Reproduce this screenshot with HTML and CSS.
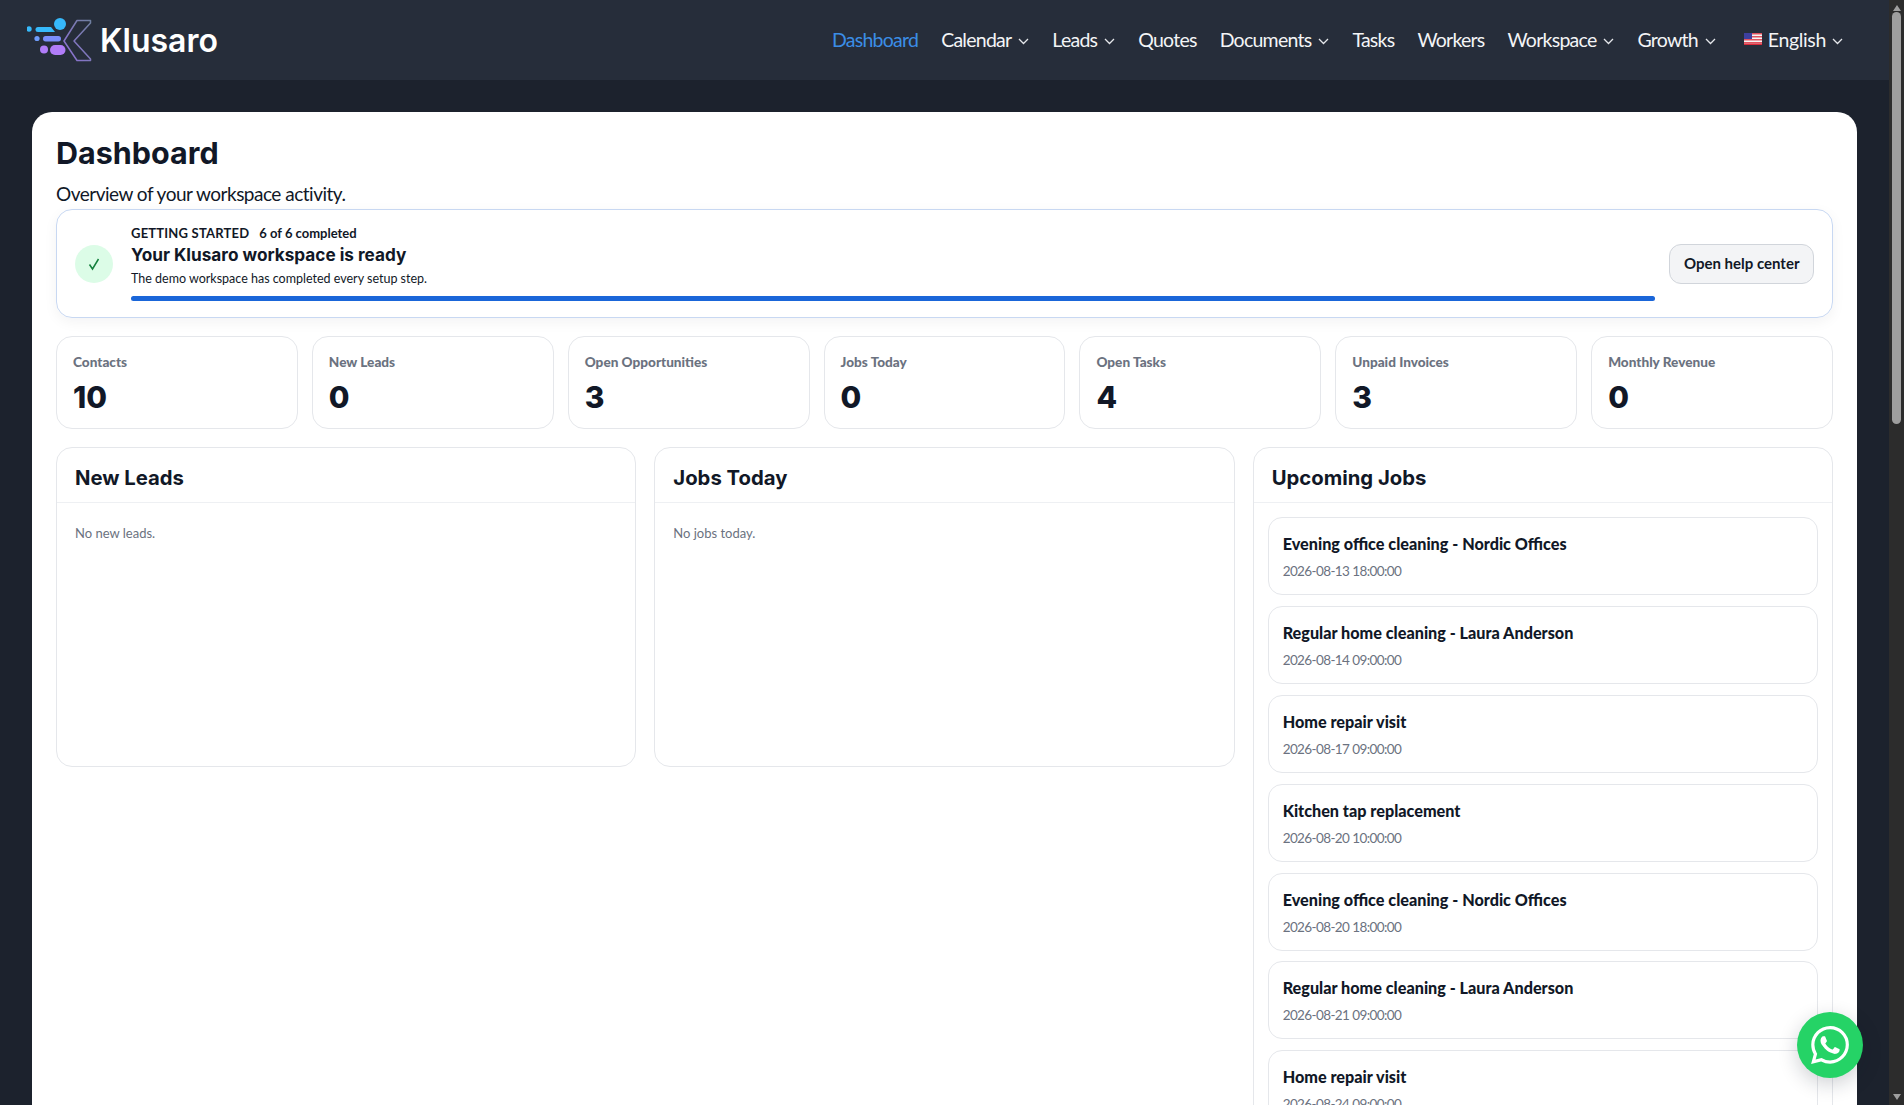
FILE: index.html
```html
<!doctype html>
<html>
    <head>
        <meta charset="utf-8" />
        <meta name="viewport" content="width=device-width, initial-scale=1" />
        <title>Dashboard</title>
        <link rel="stylesheet" href="styles.css">
    </head>
    <body>
        <header class="navbar">
            <a class="brand" href="#">
                <svg class="brand-mark" width="66" height="44" viewBox="27 20 66 44">
                    <defs>
                        <linearGradient id="kGrad" x1="0" y1="1" x2="1" y2="0">
                            <stop offset="0" stop-color="#8f6fd8" />
                            <stop offset="1" stop-color="#6f7f9f" />
                        </linearGradient>
                    </defs>
                    <circle cx="60" cy="26" r="6" fill="#36b9fb" />
                    <circle cx="29" cy="31" r="2.7" fill="#36b9fb" />
                    <path d="M38 29h13l4 5H38a2.5 2.5 0 0 1 0-5z" fill="#36b9fb" />
                    <circle cx="37" cy="40.500" r="2.600" fill="#6f9cfb" />
                    <rect x="43" y="38" width="18" height="5.500" rx="2.700" fill="#7b8dfb" />
                    <circle cx="44" cy="51.500" r="4" fill="#b07cf8" />
                    <rect x="50" y="47" width="15.500" height="10" rx="5" fill="#b07cf8" />
                    <path d="M64 43 77 22.500h13.500v2.500L74 43l16.500 18v1.500H77z" fill="none" stroke="url(#kGrad)" stroke-width="1.500" stroke-linejoin="round" />
                </svg>
                <span class="brand-name">Klusaro</span>
            </a>
            <nav class="nav">
                <a class="nav-link active" href="#">Dashboard</a>
                <a class="nav-link" href="#">Calendar <svg class="caret" width="11" height="7" viewBox="0 0 11 7"><path d="M1 1l4.500 4.500L10 1" /></svg></a>
                <a class="nav-link" href="#">Leads <svg class="caret" width="11" height="7" viewBox="0 0 11 7"><path d="M1 1l4.500 4.500L10 1" /></svg></a>
                <a class="nav-link" href="#">Quotes</a>
                <a class="nav-link" href="#">Documents <svg class="caret" width="11" height="7" viewBox="0 0 11 7"><path d="M1 1l4.500 4.500L10 1" /></svg></a>
                <a class="nav-link" href="#">Tasks</a>
                <a class="nav-link" href="#">Workers</a>
                <a class="nav-link" href="#">Workspace <svg class="caret" width="11" height="7" viewBox="0 0 11 7"><path d="M1 1l4.500 4.500L10 1" /></svg></a>
                <a class="nav-link" href="#">Growth <svg class="caret" width="11" height="7" viewBox="0 0 11 7"><path d="M1 1l4.500 4.500L10 1" /></svg></a>
                <a class="nav-link lang" href="#">
                    <svg class="flag" width="18" height="12" viewBox="0 0 18 12">
                        <rect width="18" height="12" fill="#f4f4f4" />
                        <path d="M0 0h18v1.500H0zM0 3h18v1.500H0zM0 6h18v1.500H0zM0 9h18v1.500H0z" fill="#e0525e" />
                        <rect y="10.500" width="18" height="1.500" fill="#d92a3a" />
                        <rect width="8" height="6" fill="#3d3f9e" />
                    </svg>
                    English <svg class="caret" width="11" height="7" viewBox="0 0 11 7"><path d="M1 1l4.500 4.500L10 1" /></svg>
                </a>
            </nav>
        </header>

        <main class="page">
            <h1>Dashboard</h1>
            <p class="subtitle">Overview of your workspace activity.</p>

            <section class="setup">
                <div class="setup-check">
                    <svg width="14" height="14" viewBox="0 0 14 14"><path d="M2.500 7.500 5.500 12 11.500 2" /></svg>
                </div>
                <div class="setup-main">
                    <div class="setup-eyebrow"><span class="caps">GETTING STARTED</span><span>6 of 6 completed</span></div>
                    <div class="setup-title">Your Klusaro workspace is ready</div>
                    <div class="setup-desc">The demo workspace has completed every setup step.</div>
                    <div class="progress"><div class="progress-fill"></div></div>
                </div>
                <a class="btn" href="#">Open help center</a>
            </section>

            <section class="stats">
                <div class="stat"><div class="stat-label">Contacts</div><div class="stat-value">10</div></div>
                <div class="stat"><div class="stat-label">New Leads</div><div class="stat-value">0</div></div>
                <div class="stat"><div class="stat-label">Open Opportunities</div><div class="stat-value">3</div></div>
                <div class="stat"><div class="stat-label">Jobs Today</div><div class="stat-value">0</div></div>
                <div class="stat"><div class="stat-label">Open Tasks</div><div class="stat-value">4</div></div>
                <div class="stat"><div class="stat-label">Unpaid Invoices</div><div class="stat-value">3</div></div>
                <div class="stat"><div class="stat-label">Monthly Revenue</div><div class="stat-value">0</div></div>
            </section>

            <section class="panels">
                <div class="panel">
                    <h2>New Leads</h2>
                    <p class="empty">No new leads.</p>
                </div>
                <div class="panel">
                    <h2>Jobs Today</h2>
                    <p class="empty">No jobs today.</p>
                </div>
                <div class="panel">
                    <h2>Upcoming Jobs</h2>
                    <div class="jobs">
                        <div class="job"><div class="job-title">Evening office cleaning - Nordic Offices</div><div class="job-date">2026-08-13 18:00:00</div></div>
                        <div class="job"><div class="job-title">Regular home cleaning - Laura Anderson</div><div class="job-date">2026-08-14 09:00:00</div></div>
                        <div class="job"><div class="job-title">Home repair visit</div><div class="job-date">2026-08-17 09:00:00</div></div>
                        <div class="job"><div class="job-title">Kitchen tap replacement</div><div class="job-date">2026-08-20 10:00:00</div></div>
                        <div class="job"><div class="job-title">Evening office cleaning - Nordic Offices</div><div class="job-date">2026-08-20 18:00:00</div></div>
                        <div class="job"><div class="job-title">Regular home cleaning - Laura Anderson</div><div class="job-date">2026-08-21 09:00:00</div></div>
                        <div class="job"><div class="job-title">Home repair visit</div><div class="job-date">2026-08-24 09:00:00</div></div>
                    </div>
                </div>
            </section>
        </main>

        <a class="whatsapp" href="#" aria-label="WhatsApp">
            <svg width="38" height="38" viewBox="0 0 24 24"><path d="M17.472 14.382c-.297-.149-1.758-.867-2.030-.967-.273-.099-.471-.148-.670.150-.197.297-.767.966-.940 1.164-.173.199-.347.223-.644.075-.297-.150-1.255-.463-2.390-1.475-.883-.788-1.480-1.761-1.653-2.059-.173-.297-.018-.458.130-.606.134-.133.298-.347.446-.520.149-.174.198-.298.298-.497.099-.198.050-.371-.025-.520-.075-.149-.669-1.612-.916-2.207-.242-.579-.487-.500-.669-.510-.173-.008-.371-.010-.570-.010-.198 0-.520.074-.792.372-.272.297-1.040 1.016-1.040 2.479 0 1.462 1.065 2.875 1.213 3.074.149.198 2.096 3.200 5.077 4.487.709.306 1.262.489 1.694.625.712.227 1.360.195 1.871.118.571-.085 1.758-.719 2.006-1.413.248-.694.248-1.289.173-1.413-.074-.124-.272-.198-.570-.347m-5.421 7.403h-.004a9.870 9.870 0 0 1-5.031-1.378l-.361-.214-3.741.982.998-3.648-.235-.374a9.860 9.860 0 0 1-1.510-5.260c.001-5.450 4.436-9.884 9.888-9.884 2.640 0 5.122 1.030 6.988 2.898a9.825 9.825 0 0 1 2.893 6.994c-.003 5.450-4.437 9.884-9.885 9.884m8.413-18.297A11.815 11.815 0 0 0 12.050 0C5.495 0 .160 5.335.157 11.892c0 2.096.547 4.142 1.588 5.945L.057 24l6.305-1.654a11.882 11.882 0 0 0 5.683 1.448h.005c6.554 0 11.890-5.335 11.893-11.893a11.821 11.821 0 0 0-3.480-8.413z" fill="#fff" /></svg>
        </a>

        <div class="scrollbar">
            <div class="scroll-up"></div>
            <div class="scroll-thumb"></div>
            <div class="scroll-down"></div>
        </div>
    </body>
</html>
```

FILE: styles.css
```css
* {
    box-sizing: border-box;
}

body {
    margin: 0;
    padding-right: 15px;
    background: #1c222d;
    font-family: "Lato", "Liberation Sans", sans-serif;
    color: #111827;
}

a {
    text-decoration: none;
    color: inherit;
}

.navbar {
    display: flex;
    align-items: center;
    justify-content: space-between;
    height: 80px;
    padding: 0 46px 0 27px;
    background: #262d3a;
}

.brand {
    display: flex;
    align-items: center;
    gap: 7px;
}

.brand-name {
    font-family: "Inter", sans-serif;
    font-size: 32px;
    font-weight: 600;
    color: #fff;
}

.nav {
    display: flex;
    align-items: center;
    gap: 23px;
    padding-bottom: 2px;
}

.nav-link {
    display: flex;
    align-items: center;
    gap: 7px;
    font-size: 19.5px;
    letter-spacing: -0.75px;
    color: #f3f4f6;
}

.nav-link.active {
    color: #3b8de6;
}

.lang {
    margin-left: 5px;
    gap: 6px;
    letter-spacing: -0.35px;
}

.caret {
    margin-top: 4px;
    fill: none;
    stroke: #e5e7eb;
    stroke-width: 1.3;
}

.page {
    margin: 32px 32px 0;
    padding: 23px 24px 24px;
    background: #fff;
    border-radius: 20px;
}

h1 {
    margin: 0;
    font-family: "Inter", sans-serif;
    font-size: 30.5px;
    font-weight: 700;
    line-height: 36px;
}

.subtitle {
    margin: 10px 0 3px;
    font-size: 19px;
    letter-spacing: -0.5px;
    line-height: 25px;
}

.setup {
    display: flex;
    align-items: center;
    gap: 18px;
    height: 109px;
    padding: 0 18px;
    border: 1px solid #c8d8f2;
    border-radius: 16px;
    box-shadow: 0 4px 14px rgba(17, 24, 39, 0.05);
}

.setup-check {
    display: flex;
    align-items: center;
    justify-content: center;
    flex: none;
    width: 38px;
    height: 38px;
    border-radius: 50%;
    background: #dcfce7;
}

.setup-check path {
    fill: none;
    stroke: #15803d;
    stroke-width: 1.5;
}

.setup-main {
    flex: 1;
    padding-bottom: 2px;
}

.setup-eyebrow {
    display: flex;
    gap: 10px;
    font-size: 13px;
    font-weight: 700;
    line-height: 16px;
}

.caps {
    letter-spacing: 0.2px;
}

.setup-title {
    margin-top: 1px;
    font-family: "Inter", sans-serif;
    font-size: 17.2px;
    font-weight: 700;
    line-height: 26px;
}

.setup-desc {
    margin-top: 2px;
    font-size: 12.5px;
    line-height: 18px;
}

.progress {
    height: 5px;
    margin-top: 8px;
    border-radius: 3px;
    background: #e5e7eb;
}

.progress-fill {
    width: 100%;
    height: 100%;
    border-radius: 3px;
    background: #1a66d9;
}

.btn {
    flex: none;
    margin-left: -4px;
    padding: 9px 13.5px 11px;
    border: 1px solid #d1d5db;
    border-radius: 12px;
    background: #f3f4f6;
    font-size: 15px;
    font-weight: 700;
    line-height: 18px;
}

.stats {
    display: grid;
    grid-template-columns: repeat(7, 1fr);
    gap: 14px;
    margin-top: 18px;
}

.stat {
    height: 93px;
    padding: 16px 16px;
    border: 1px solid #e5e7eb;
    border-radius: 16px;
}

.stat-label {
    font-size: 13.6px;
    font-weight: 900;
    line-height: 18px;
    color: #6b7280;
}

.stat-value {
    margin-top: 8px;
    font-family: "Inter", sans-serif;
    font-size: 30px;
    font-weight: 800;
    line-height: 36px;
}

.panels {
    display: grid;
    grid-template-columns: repeat(3, 1fr);
    align-items: start;
    gap: 18px;
    margin-top: 18px;
}

.panel {
    min-height: 320px;
    border: 1px solid #e5e7eb;
    border-radius: 16px;
}

h2 {
    margin: 0;
    padding: 5px 18px 0;
    border-bottom: 1px solid #eef0f3;
    font-family: "Inter", sans-serif;
    font-size: 20.3px;
    font-weight: 700;
    line-height: 49px;
}

.empty {
    margin: 0;
    padding: 21px 18px;
    font-size: 13px;
    line-height: 18px;
    color: #6b7280;
}

.jobs {
    display: flex;
    flex-direction: column;
    gap: 10.9px;
    padding: 14px;
}

.job {
    height: 78px;
    padding: 15px 14px;
    border: 1px solid #e5e7eb;
    border-radius: 14px;
}

.job-title {
    font-size: 16.2px;
    font-weight: 900;
    line-height: 22px;
}

.job-date {
    margin-top: 6px;
    font-size: 13.5px;
    letter-spacing: -0.6px;
    line-height: 20px;
    color: #6b7280;
}

.whatsapp {
    position: fixed;
    right: 41px;
    bottom: 27px;
    display: flex;
    align-items: center;
    justify-content: center;
    width: 66px;
    height: 66px;
    border-radius: 50%;
    background: #25d366;
    box-shadow: 0 6px 20px rgba(17, 24, 39, 0.2);
}

.scrollbar {
    position: fixed;
    top: 0;
    right: 0;
    bottom: 0;
    display: flex;
    flex-direction: column;
    align-items: center;
    width: 15px;
    padding: 5px 0;
    background: #2c2c2c;
}

.scroll-up {
    border: 4.5px solid transparent;
    border-top: 0;
    border-bottom: 6px solid #9e9e9e;
}

.scroll-thumb {
    width: 9px;
    height: 412px;
    margin-top: 1px;
    border-radius: 5px;
    background: #9e9e9e;
}

.scroll-down {
    margin-top: auto;
    border: 4.5px solid transparent;
    border-bottom: 0;
    border-top: 6px solid #9e9e9e;
}
```
